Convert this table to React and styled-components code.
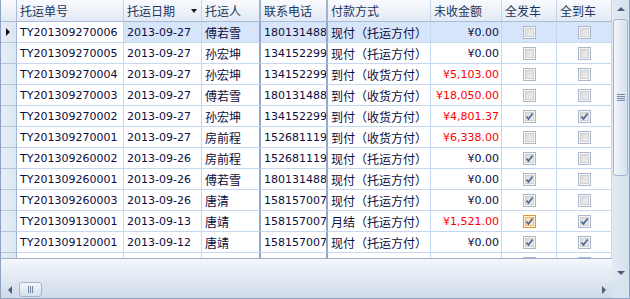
import styled, { createGlobalStyle } from 'styled-components';

const GlobalStyle = createGlobalStyle`
  html, body {
    margin: 0;
    padding: 0;
    background: #fff;
  }
  body {
    font-family: "DejaVu Sans", "Noto Sans CJK SC", sans-serif;
  }
`;

const columns = [
  { key: 'no', title: '托运单号', width: 107 },
  { key: 'date', title: '托运日期', width: 78, sorted: true },
  { key: 'name', title: '托运人', width: 59, cjk: true, band: true },
  { key: 'phone', title: '联系电话', width: 67, band: true },
  { key: 'pay', title: '付款方式', width: 103, cjk: true },
  { key: 'due', title: '未收金额', width: 71, align: 'right' },
  { key: 'sent', title: '全发车', width: 55, check: true },
  { key: 'arrived', title: '全到车', width: 55, check: true },
];

const CASH = '现付（托运方付）';
const COD = '到付（收货方付）';

const rows = [
  { no: 'TY201309270006', date: '2013-09-27', name: '傅若雪', phone: '18013148866', pay: CASH, due: '¥0.00', sent: false, arrived: false },
  { no: 'TY201309270005', date: '2013-09-27', name: '孙宏坤', phone: '13415229977', pay: CASH, due: '¥0.00', sent: false, arrived: false },
  { no: 'TY201309270004', date: '2013-09-27', name: '孙宏坤', phone: '13415229977', pay: COD, due: '¥5,103.00', owed: true, sent: false, arrived: false },
  { no: 'TY201309270003', date: '2013-09-27', name: '傅若雪', phone: '18013148866', pay: COD, due: '¥18,050.00', owed: true, sent: false, arrived: false },
  { no: 'TY201309270002', date: '2013-09-27', name: '孙宏坤', phone: '13415229977', pay: COD, due: '¥4,801.37', owed: true, sent: true, arrived: true },
  { no: 'TY201309270001', date: '2013-09-27', name: '房前程', phone: '15268111955', pay: COD, due: '¥6,338.00', owed: true, sent: false, arrived: false },
  { no: 'TY201309260002', date: '2013-09-26', name: '房前程', phone: '15268111955', pay: CASH, due: '¥0.00', sent: true, arrived: false },
  { no: 'TY201309260001', date: '2013-09-26', name: '傅若雪', phone: '18013148866', pay: CASH, due: '¥0.00', sent: true, arrived: false },
  { no: 'TY201309260003', date: '2013-09-26', name: '唐清', phone: '15815700788', pay: CASH, due: '¥0.00', sent: true, arrived: false },
  { no: 'TY201309130001', date: '2013-09-13', name: '唐靖', phone: '15815700788', pay: '月结（托运方付）', due: '¥1,521.00', owed: true, sent: true, arrived: true, hot: 'sent' },
  { no: 'TY201309120001', date: '2013-09-12', name: '唐靖', phone: '15815700788', pay: CASH, due: '¥0.00', sent: true, arrived: true },
  { no: 'TY201309110001', date: '2013-09-11', name: '唐靖', phone: '15815700788', pay: CASH, due: '¥0.00', sent: true, arrived: true },
];

export default function App() {
  return (
    <>
      <GlobalStyle />
      <Frame>
        <Main>
          <HeaderRow>
            <HeaderCorner />
            {columns.map((c) => (
              <HeaderCell key={c.key} $w={c.width} $band={c.band}>
                {c.title}
                {c.sorted && <SortArrow />}
              </HeaderCell>
            ))}
          </HeaderRow>
          <Body>
            {rows.map((r, i) => (
              <Row key={r.no}>
                <Indicator>{i === 0 && <CurrentMark />}</Indicator>
                {columns.map((c, ci) => (
                  <Cell
                    key={c.key}
                    $w={c.width}
                    $band={c.band}
                    $cjk={c.cjk}
                    $align={c.check ? 'center' : c.align}
                    $selected={i === 0 && ci > 0}
                    $red={c.key === 'due' && r.owed}
                  >
                    {c.check ? (
                      <CheckBox checked={r[c.key]} hot={r.hot === c.key} />
                    ) : (
                      r[c.key]
                    )}
                  </Cell>
                ))}
              </Row>
            ))}
          </Body>
          <Footer />
        </Main>

        <VScroll>
          <ScrollButton $v>
            <Arrow $dir="up" />
          </ScrollButton>
          <VTrack>
            <VThumb>
              <Grip $v>
                <i /><i /><i /><i />
              </Grip>
            </VThumb>
          </VTrack>
          <ScrollButton $v>
            <Arrow $dir="down" />
          </ScrollButton>
        </VScroll>

        <HScroll>
          <ScrollButton>
            <Arrow $dir="left" />
          </ScrollButton>
          <HTrack>
            <HThumb>
              <Grip>
                <i /><i /><i />
              </Grip>
            </HThumb>
          </HTrack>
          <ScrollButton>
            <Arrow $dir="right" />
          </ScrollButton>
        </HScroll>

        <Corner />
      </Frame>
    </>
  );
}

function CheckBox({ checked, hot }) {
  return (
    <Check $hot={hot}>
      {checked && (
        <svg width="9" height="9" viewBox="0 0 9 9">
          <path d="M1.4 4.6 L3.5 6.9 L7.6 1.4" fill="none" stroke="#4b6899" strokeWidth="1.7" />
        </svg>
      )}
    </Check>
  );
}

const Frame = styled.div`
  width: 630px;
  height: 299px;
  box-sizing: border-box;
  border: 1px solid #8ea3c0;
  border-top: none;
  display: grid;
  grid-template-columns: 611px 17px;
  grid-template-rows: 281px 17px;
  background: #fff;
  overflow: hidden;
`;

const Main = styled.div`
  display: flex;
  flex-direction: column;
  min-height: 0;
`;

const HeaderRow = styled.div`
  display: flex;
  height: 22px;
  flex: none;
  box-sizing: border-box;
  border-bottom: 1px solid #a9bcd7;
  background: linear-gradient(#f8fafd, #e3eaf5);
`;

const HeaderCorner = styled.div`
  width: 16px;
  flex: none;
  box-sizing: border-box;
  border-right: 1px solid #aabdd8;
`;

const HeaderCell = styled.div`
  width: ${(p) => p.$w}px;
  flex: none;
  box-sizing: border-box;
  display: flex;
  align-items: center;
  padding: 0 4px 0 3px;
  border-right: ${(p) => (p.$band ? '2px solid #9fb4d1' : '1px solid #c6d4e8')};
  font-family: "Noto Sans CJK SC", sans-serif;
  font-size: 12px;
  color: #1e3557;
  white-space: nowrap;
  overflow: hidden;
`;

const SortArrow = styled.span`
  margin-left: auto;
  width: 0;
  height: 0;
  border-left: 3.5px solid transparent;
  border-right: 3.5px solid transparent;
  border-top: 4px solid #1a1a1a;
`;

const Body = styled.div`
  flex: 1;
  overflow: hidden;
`;

const Row = styled.div`
  display: flex;
  height: 21px;
`;

const Indicator = styled.div`
  width: 16px;
  flex: none;
  box-sizing: border-box;
  display: flex;
  align-items: center;
  padding-left: 5px;
  background: linear-gradient(to right, #e8eef8, #dde6f3);
  border-right: 1px solid #a3b7d3;
  border-bottom: 1px solid #b4c5dd;
`;

const CurrentMark = styled.span`
  width: 0;
  height: 0;
  border-top: 4px solid transparent;
  border-bottom: 4px solid transparent;
  border-left: 4px solid #111;
`;

const Cell = styled.div`
  width: ${(p) => p.$w}px;
  flex: none;
  box-sizing: border-box;
  display: flex;
  align-items: center;
  justify-content: ${(p) =>
    p.$align === 'right' ? 'flex-end' : p.$align === 'center' ? 'center' : 'flex-start'};
  padding: 0 2px 0 3px;
  background: ${(p) => (p.$selected ? '#d6e5f9' : '#fff')};
  border-bottom: 1px solid #c6d8f0;
  border-right: ${(p) => (p.$band ? '2px solid #92a8c9' : '1px solid #c6d8f0')};
  font-family: ${(p) => (p.$cjk ? '"Noto Sans CJK SC", sans-serif' : '"DejaVu Sans", "Noto Sans CJK SC", sans-serif')};
  font-size: ${(p) => (p.$cjk ? '12px' : '11px')};
  color: ${(p) => (p.$red ? '#ff0000' : '#0d0d3d')};
  white-space: nowrap;
  overflow: hidden;
`;

const Check = styled.span`
  width: 13px;
  height: 13px;
  box-sizing: border-box;
  display: flex;
  align-items: center;
  justify-content: center;
  border: 1px solid ${(p) => (p.$hot ? '#e2953a' : '#a9b8cd')};
  background: ${(p) =>
    p.$hot ? 'linear-gradient(135deg, #fbd9a2, #fdedd2)' : 'linear-gradient(135deg, #d9d9d9, #f1f1f1)'};
  box-shadow: inset 0 0 0 1px ${(p) => (p.$hot ? '#fff1d8' : '#f7f7f7')},
    inset 0 0 0 2px ${(p) => (p.$hot ? '#f0b867' : '#cfcfcf')};
`;

const Footer = styled.div`
  height: 23px;
  flex: none;
  box-sizing: border-box;
  border-top: 1px solid #9cb0cd;
  background: linear-gradient(#f5f8fc, #e6edf6 60%, #dfe7f3);
`;

const VScroll = styled.div`
  display: flex;
  flex-direction: column;
  background: linear-gradient(to right, #e3eaf4, #d6e0ed);
`;

const HScroll = styled.div`
  display: flex;
  background: linear-gradient(#dde6f1, #d0dbea);
`;

const Corner = styled.div`
  background: #d9e2ef;
`;

const ScrollButton = styled.div`
  flex: none;
  width: ${(p) => (p.$v ? 'auto' : '17px')};
  height: ${(p) => (p.$v ? '17px' : 'auto')};
  display: flex;
  align-items: center;
  justify-content: center;
`;

const Arrow = styled.span`
  width: 0;
  height: 0;
  ${(p) =>
    p.$dir === 'up'
      ? 'border-left: 4px solid transparent; border-right: 4px solid transparent; border-bottom: 4px solid #4c5c7b;'
      : p.$dir === 'down'
      ? 'border-left: 4px solid transparent; border-right: 4px solid transparent; border-top: 4px solid #4c5c7b;'
      : p.$dir === 'left'
      ? 'border-top: 4px solid transparent; border-bottom: 4px solid transparent; border-right: 4px solid #4c5c7b;'
      : 'border-top: 4px solid transparent; border-bottom: 4px solid transparent; border-left: 4px solid #4c5c7b;'}
`;

const VTrack = styled.div`
  flex: 1;
  padding: 2px 1px 0;
`;

const HTrack = styled.div`
  flex: 1;
  padding: 1px 0 1px 1px;
  display: flex;
`;

const thumbLook = `
  box-sizing: border-box;
  border: 1px solid #a2b5d0;
  border-radius: 3px;
  display: flex;
  align-items: center;
  justify-content: center;
`;

const VThumb = styled.div`
  ${thumbLook}
  height: 157px;
  background: linear-gradient(to right, #f5f8fc, #e4ebf5 50%, #d5e0ee);
`;

const HThumb = styled.div`
  ${thumbLook}
  width: 23px;
  background: linear-gradient(#f5f8fc, #e4ebf5 50%, #d5e0ee);
`;

const Grip = styled.span`
  display: flex;
  flex-direction: ${(p) => (p.$v ? 'column' : 'row')};
  gap: 1px;

  i {
    display: block;
    width: ${(p) => (p.$v ? '8px' : '1px')};
    height: ${(p) => (p.$v ? '1px' : '7px')};
    background: #7286a6;
  }
`;
